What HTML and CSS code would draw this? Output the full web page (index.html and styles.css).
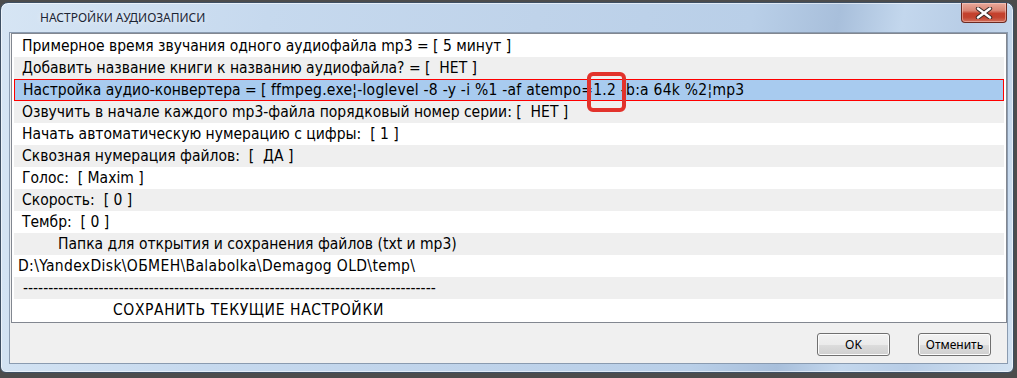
FILE: index.html
```html
<!DOCTYPE html>
<html lang="ru">
<head>
<meta charset="utf-8">
<title>Настройки аудиозаписи</title>
<link rel="stylesheet" href="styles.css">
</head>
<body>
<div class="window">
  <div class="titlebar">
    <span class="title">НАСТРОЙКИ АУДИОЗАПИСИ</span>
    <div class="close">
      <svg width="20" height="12" viewBox="0 0 20 12">
        <path d="M4 1.5 L16 10.5 M16 1.5 L4 10.5" stroke="#3b2a28" stroke-width="4.4" stroke-linecap="round"/>
        <path d="M4 1.5 L16 10.5 M16 1.5 L4 10.5" stroke="#ffffff" stroke-width="2.4" stroke-linecap="round"/>
      </svg>
    </div>
  </div>
  <div class="client">
    <div class="list">
      <div class="row">Примерное время звучания одного аудиофайла mp3 = [ 5 минут ]</div>
      <div class="row alt">Добавить название книги к названию аудиофайла? = [  НЕТ ]</div>
      <div class="row sel">Настройка аудио-конвертера = [ <span class="cmd">ffmpeg.exe¦-loglevel -8 -y -i %1 -af atempo=<span class="mark">1.2</span> -b:a 64k %2¦mp3</span></div>
      <div class="row alt">Озвучить в начале каждого mp3-файла порядковый номер серии: [  НЕТ ]</div>
      <div class="row">Начать автоматическую нумерацию с цифры:  [ 1 ]</div>
      <div class="row alt">Сквозная нумерация файлов:  [  ДА ]</div>
      <div class="row">Голос:  [ Maxim ]</div>
      <div class="row alt">Скорость:  [ 0 ]</div>
      <div class="row">Тембр:  [ 0 ]</div>
      <div class="row alt indent">Папка для открытия и сохранения файлов (txt и mp3)</div>
      <div class="row path">D:\YandexDisk\ОБМЕН\Balabolka\Demagog OLD\temp\</div>
      <div class="row alt dashes">----------------------------------------------------------------------------------</div>
      <div class="row save">СОХРАНИТЬ ТЕКУЩИЕ НАСТРОЙКИ</div>
    </div>
    <div class="footer">
      <button class="btn">OK</button>
      <button class="btn">Отменить</button>
    </div>
  </div>
</div>
</body>
</html>
```
FILE: styles.css
```css
*, *::before, *::after { box-sizing: border-box; }

html, body {
  margin: 0;
  width: 1017px;
  height: 378px;
  overflow: hidden;
}

body {
  background: #4c4c4c;
}

.window {
  margin-top: 2px;
  width: 1014px;
  height: 371px;
  border: 1px solid #3e4f63;
  border-radius: 8px 8px 6px 6px;
  background: linear-gradient(100deg, #d6e5f4 0%, #c6d9ee 25%, #bfd3ea 50%, #b9cfe8 70%, #a8bfdb 78%, #c3d7ed 84%, #b8cde6 90%, #d2e2f2 100%);
  padding: 0 5px 8px 8px;
  display: flex;
  flex-direction: column;
  box-shadow: inset 0 0 0 1px rgba(255,255,255,0.55);
}

.titlebar {
  height: 29px;
  display: flex;
  align-items: flex-start;
}

.title {
  padding-left: 31px;
  padding-top: 7px;
  font-family: "Noto Sans", "Open Sans", sans-serif;
  font-size: 12px;
  line-height: 16px;
  color: #1c2535;
  text-shadow: 0 0 6px rgba(255,255,255,0.8);
}

.close {
  margin-left: auto;
  margin-right: 1px;
  width: 46px;
  height: 20px;
  border: 1px solid #6b2a22;
  border-top: none;
  border-radius: 0 0 4px 4px;
  background: linear-gradient(180deg, #e9a99b 0%, #d98473 40%, #c4412d 55%, #c2432f 75%, #d2705c 100%);
  box-shadow: inset 0 0 0 1px rgba(255,220,210,0.45);
  display: flex;
  align-items: center;
  justify-content: center;
}

.client {
  flex: 1;
  border: 1px solid #8a9bb0;
  background: #f0f0f0;
  display: flex;
  flex-direction: column;
}

.list {
  margin-left: 1px;
  border: 1px solid #828790;
  background: #ffffff;
  padding: 1px 2px;
  font-family: "DejaVu Sans", sans-serif;
  font-stretch: condensed;
  font-size: 15.5px;
  color: #000;
}

.row {
  height: 22px;
  line-height: 22px;
  padding-left: 8px;
  white-space: pre;
}

.row.alt { background: #efefef; }

.row.sel {
  background: #a8cbef;
  border: 1px solid #ff0000;
  line-height: 20px;
}

.cmd { letter-spacing: 0.25px; }

.row.indent { padding-left: 44px; }
.row.path { padding-left: 4px; letter-spacing: 0.35px; }
.row.dashes { padding-left: 9px; }
.row.save { padding-left: 99px; letter-spacing: 0.6px; }

.mark {
  position: relative;
}

.mark::after {
  content: "";
  position: absolute;
  left: -6px;
  top: -9px;
  width: 39px;
  height: 40px;
  border: 4px solid #e2332c;
  border-radius: 6px;
}

.footer {
  height: 40px;
  display: flex;
  justify-content: flex-end;
  align-items: flex-start;
  gap: 28px;
  padding: 10px 16px 0 0;
}

.btn {
  width: 73px;
  height: 23px;
  border: 1px solid #707070;
  border-radius: 3px;
  background: linear-gradient(180deg, #f2f2f2 0%, #ebebeb 50%, #dddddd 51%, #cfcfcf 100%);
  box-shadow: inset 0 0 0 1px #fcfcfc;
  font-family: "Noto Sans", "Open Sans", sans-serif;
  font-size: 12px;
  color: #000;
  padding: 0;
}
```
